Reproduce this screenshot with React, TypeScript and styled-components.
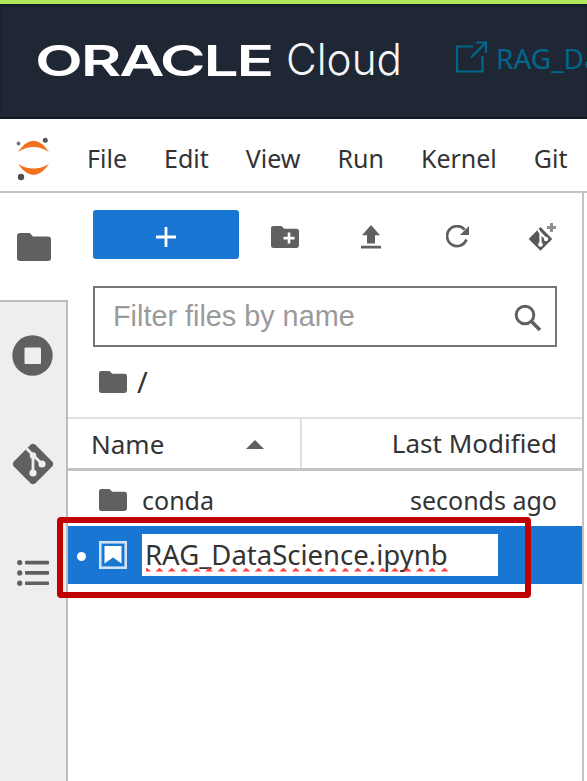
import React from "react";
import styled, { createGlobalStyle } from "styled-components";

const Global = createGlobalStyle`
  * { box-sizing: border-box; }
  body { margin: 0; background: #fff; overflow: hidden; font-family: "Noto Sans", "Open Sans", sans-serif; font-size: 25px; color: #333; }
  svg { display: block; flex: none; }
`;

const Screen = styled.div`
  width: 587px;
  height: 781px;
  display: flex;
  flex-direction: column;
  overflow: hidden;
  background: #fff;
`;

const Banner = styled.header`
  flex: none;
  height: 119px;
  display: flex;
  align-items: center;
  background: #1e2733;
  border-top: 4px solid #b0ea5c;
  box-shadow: inset 0 2px 1px #131b29, inset 0 -2px 1px #101a29;
  padding: 0 0 5px 35px;
  white-space: nowrap;
`;

const Wordmark = styled.div`
  flex: none;
  width: 251px;
  color: #fff;
  font: 600 43px/50px Inter, sans-serif;
  letter-spacing: -1.5px;
  padding-top: 1px;
  span { display: inline-block; transform: scaleX(1.448); transform-origin: 0 50%; }
`;

const Product = styled.div`
  flex: none;
  width: 168px;
  color: #f4f5f6;
  font: 300 44px/50px Inter, sans-serif;
  span { display: inline-block; transform: scaleX(0.96); transform-origin: 0 50%; }
`;

const ProjectLink = styled.div`
  display: flex;
  align-items: center;
  gap: 8px;
  color: #00688c;
  font-size: 28px;
  line-height: 40px;
  padding-bottom: 3px;
  svg { margin-top: -2px; }
`;

const MenuBar = styled.nav`
  flex: none;
  height: 74px;
  display: flex;
  align-items: center;
  gap: 37px;
  padding: 6px 0 0 14px;
  border-bottom: 2px solid #c4c4c4;
  white-space: nowrap;
`;

const Workspace = styled.main`
  flex: 1;
  display: flex;
  min-height: 0;
`;

const Rail = styled.aside`
  flex: none;
  width: 68px;
  display: flex;
  flex-direction: column;
`;

const RailTab = styled.div<{ $h: number }>`
  height: ${(p) => p.$h}px;
  display: flex;
  align-items: center;
  justify-content: center;
  padding-right: 1px;
`;

const RailRest = styled.div`
  flex: 1;
  background: #eee;
  border-top: 2px solid #bdbdbd;
  border-right: 2px solid #bdbdbd;
`;

const Browser = styled.section`
  flex: none;
  width: 516px;
  border-right: 2px solid #c2c2c2;
`;

const Tools = styled.div`
  height: 93px;
  display: flex;
  align-items: flex-start;
  padding: 17px 0 0 25px;
`;

const NewButton = styled.button`
  width: 147px;
  height: 49px;
  display: flex;
  align-items: center;
  justify-content: center;
  padding: 4px 0 0;
  border: 0;
  border-radius: 3px;
  background: #1976d2;
`;

const Tool = styled.div<{ $w: number }>`
  width: ${(p) => p.$w}px;
  height: 53px;
  display: flex;
  align-items: center;
  justify-content: center;
`;

const Filter = styled.div`
  width: 464px;
  height: 61px;
  margin-left: 25px;
  padding: 0 13px 0 18px;
  display: flex;
  align-items: center;
  justify-content: space-between;
  border: 2px solid #757575;
  color: #9a9a9a;
  font-family: "Liberation Sans", Arial, sans-serif;
  font-size: 28.8px;
  svg { margin-top: 2px; }
`;

const Crumbs = styled.div`
  height: 70px;
  display: flex;
  align-items: center;
  gap: 10px;
  padding-left: 31px;
`;

const Slash = styled.span`
  font-size: 29px;
  line-height: 36px;
`;

const Heading = styled.div`
  height: 54px;
  display: flex;
  border-top: 2px solid #e0e0e0;
  border-bottom: 3px solid #c4c4c4;
  font-size: 26px;
  line-height: 36px;
`;

const NameColumn = styled.div`
  width: 234px;
  display: flex;
  align-items: center;
  justify-content: space-between;
  padding: 0 36px 0 23px;
  border-right: 2px solid #e0e0e0;
  svg { margin-top: 2px; }
`;

const DateColumn = styled.div`
  flex: 1;
  padding: 6px 25px 0 0;
  text-align: right;
`;

const Row = styled.div<{ $selected?: boolean }>`
  position: relative;
  height: ${(p) => (p.$selected ? 58 : 55)}px;
  display: flex;
  align-items: center;
  padding: ${(p) => (p.$selected ? "0 0 0 9px" : "2px 25px 0 31px")};
  background: ${(p) => (p.$selected ? "#1976d2" : "transparent")};
`;

const FileName = styled.span`
  flex: 1;
  margin-left: 15px;
`;

const Dot = styled.span`
  width: 9px;
  height: 9px;
  margin: 3px 13px 0 0;
  border-radius: 50%;
  background: #fff;
`;

const Rename = styled.div`
  width: 356px;
  height: 42px;
  margin-left: 15px;
  padding-left: 3px;
  background: #fff;
  font-size: 27.5px;
  line-height: 42px;
  white-space: nowrap;
`;

const Squiggle = styled.svg`
  position: absolute;
  left: 78px;
  top: 41px;
`;

const Highlight = styled.div`
  position: absolute;
  left: -11px;
  top: -9px;
  width: 474px;
  height: 81px;
  border: 6px solid #c00000;
  border-radius: 4px;
`;

const Folder = ({ w, h, plus }: { w: number; h: number; plus?: boolean }) => (
  <svg width={w} height={h} viewBox="0 0 28 22" preserveAspectRatio="none" fill="#606060">
    <path d="M2.600 0H10.500L13.200 2.800H25.500Q28 2.800 28 5.200V19.600Q28 22 25.500 22H2.600Q0 22 0 19.600V2.400Q0 0 2.600 0Z" />
    {plus && <path d="M18 6.600V17.600M12.500 12.100H23.500" stroke="#fff" strokeWidth="2.600" />}
  </svg>
);

const Jupyter = () => (
  <svg width="36" height="46" viewBox="0 0 36 46">
    <path d="M4 17Q19.500 -5.500 35 17Q19.500 7 4 17ZM4 29Q19.500 38 35 29Q19.500 51 4 29Z" fill="#f3701a" />
    <circle cx="31.300" cy="5.200" r="2.500" fill="#555" />
    <circle cx="4.500" cy="8.500" r="1.900" fill="#777" />
    <circle cx="7" cy="42" r="3.200" fill="#4e4e4e" />
  </svg>
);

const GitMark = () => (
  <svg width="42" height="42" viewBox="0 0 42 42">
    <path d="M18.800 1.600Q21 -.2 23.200 1.600L40.400 18.800Q42 21 40.400 23.200L23.200 40.400Q21 42 18.800 40.400L1.600 23.200Q0 21 1.600 18.800Z" fill="#606060" />
    <path d="M14.500 5.500L21 12V29M21 12L30 21" stroke="#eee" strokeWidth="2.800" fill="none" />
    <circle cx="21" cy="12.500" r="3.200" fill="#eee" />
    <circle cx="21" cy="30" r="3.600" fill="#eee" />
    <circle cx="30" cy="21" r="3.600" fill="#eee" />
  </svg>
);

const App = () => (
  <>
    <Global />
    <Screen>
      <Banner>
        <Wordmark><span>ORACLE</span></Wordmark>
        <Product><span>Cloud</span></Product>
        <ProjectLink>
          <svg width="34" height="34" viewBox="0 0 34 34" fill="none" stroke="currentColor" strokeWidth="2.200">
            <path d="M19 6.500H3V31.500H28.500V16M17 17.500L31 3.500M22 2.500H32V12.500" />
          </svg>
          RAG_Da
        </ProjectLink>
      </Banner>
      <MenuBar>
        <Jupyter />
        {["File", "Edit", "View", "Run", "Kernel", "Git"].map((m) => <span key={m}>{m}</span>)}
      </MenuBar>
      <Workspace>
        <Rail>
          <RailTab $h={107}><Folder w={34} h={28} /></RailTab>
          <RailRest>
            <RailTab $h={106}>
              <svg width="41" height="41" viewBox="0 0 41 41"><circle cx="20.500" cy="20.500" r="20.200" fill="#606060" /><rect x="12.500" y="12.500" width="16.500" height="16.500" rx="1" fill="#eee" /></svg>
            </RailTab>
            <RailTab $h={111}><GitMark /></RailTab>
            <RailTab $h={108}>
              <svg width="32" height="26" viewBox="0 0 32 26" fill="#606060">
                {[2.6, 12.9, 23.2].map((y) => <g key={y}><circle cx="2.700" cy={y} r="2.600" /><rect x="8" y={y - 1.8} width="24" height="3.600" rx=".8" /></g>)}
              </svg>
            </RailTab>
          </RailRest>
        </Rail>
        <Browser>
          <Tools>
            <NewButton aria-label="New launcher">
              <svg width="20" height="20" viewBox="0 0 20 20"><path d="M10 0V20M0 10H20" stroke="#fff" strokeWidth="2.800" /></svg>
            </NewButton>
            <Tool $w={92}><Folder w={28} h={22} plus /></Tool>
            <Tool $w={81}>
              <svg width="20" height="24" viewBox="0 0 20 24" fill="#606060"><path d="M10 0L19 10.300H14V18.500H6V10.300H1ZM0 20.800H20V23.500H0Z" /></svg>
            </Tool>
            <Tool $w={91}>
              <svg width="23" height="23" viewBox="0 0 23 23"><path d="M20.500 14.500A10 10 0 1 1 18.700 4.600" fill="none" stroke="#606060" strokeWidth="2.700" /><path d="M23 1V10H14Z" fill="#606060" /></svg>
            </Tool>
            <Tool $w={80}>
              <svg width="28" height="28" viewBox="0 0 28 28">
                <path d="M12.500 4L24.300 16L12.500 27.800L.7 16Z" fill="#585858" />
                <path d="M10 6.500L12.500 10.500V22M12.500 10L18 16" stroke="#fff" strokeWidth="2.200" fill="none" />
                <circle cx="12.500" cy="21.500" r="2.300" fill="#fff" /><circle cx="18" cy="16" r="2.200" fill="#fff" />
                <path d="M23.500 0V9M19 4.500H28" stroke="#8d8d8d" strokeWidth="3" />
              </svg>
            </Tool>
          </Tools>
          <Filter>
            <span>Filter files by name</span>
            <svg width="28" height="28" viewBox="0 0 28 28" fill="none" stroke="#606060"><circle cx="11" cy="11" r="8.800" strokeWidth="3" /><path d="M18 18L26 26" strokeWidth="3.600" /></svg>
          </Filter>
          <Crumbs><Folder w={28} h={22} /><Slash>/</Slash></Crumbs>
          <Heading>
            <NameColumn>
              <span>Name</span>
              <svg width="18" height="9" viewBox="0 0 18 9"><path d="M9 0L18 9H0Z" fill="#606060" /></svg>
            </NameColumn>
            <DateColumn>Last Modified</DateColumn>
          </Heading>
          <Row><Folder w={28} h={22} /><FileName>conda</FileName><span>seconds ago</span></Row>
          <Row $selected>
            <Dot />
            <svg width="28" height="28" viewBox="0 0 28 28"><rect x="1.300" y="1.300" width="25.400" height="25.400" fill="none" stroke="#cfe2f6" strokeWidth="2.600" /><path d="M5.500 5H22.500V22.500L14 16.500L5.500 22.500Z" fill="#fff" /></svg>
            <Rename>RAG_DataScience.ipynb</Rename>
            <Squiggle width="304" height="5" viewBox="0 0 304 5">
              {Array.from({ length: 25 }, (_, i) => <path key={i} d={`M${i * 12.4 - 3} 4.500L${i * 12.4 + 1} .8L${i * 12.4 + 5} 4.500Z`} fill="#ff4040" />)}
            </Squiggle>
            <Highlight />
          </Row>
        </Browser>
      </Workspace>
    </Screen>
  </>
);

export default App;
